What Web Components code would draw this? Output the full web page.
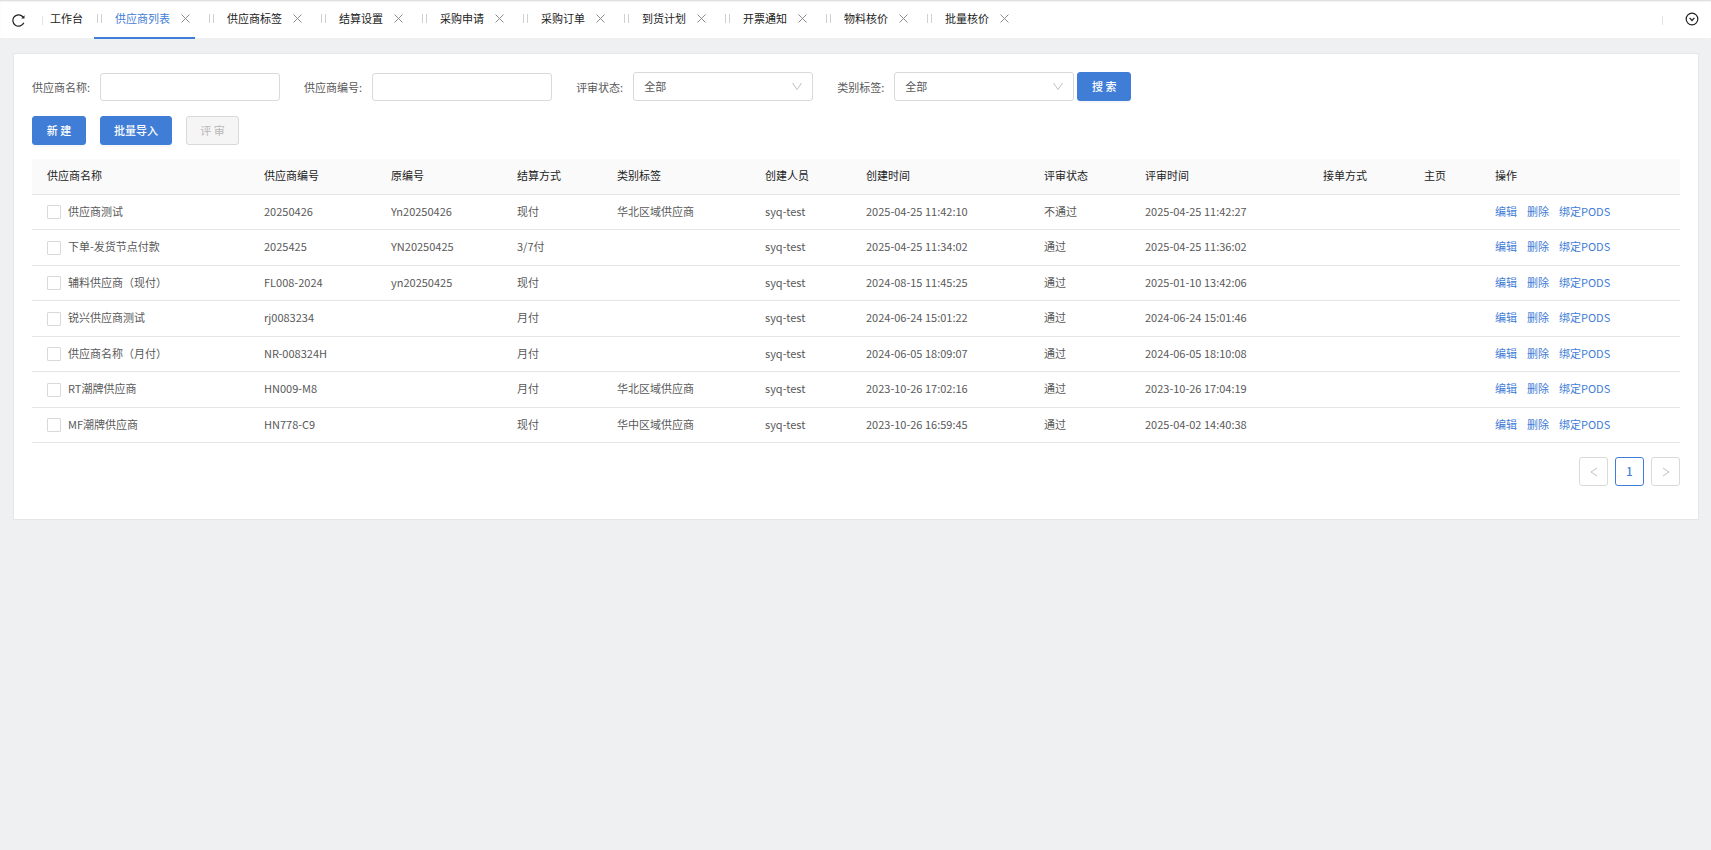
<!DOCTYPE html>
<html lang="zh-CN">
<head>
<meta charset="utf-8">
<title>供应商列表</title>
<style>
  :root {
    --primary: #3f7dd6;
    --line: #e6e6e6;
    --control-line: #d9d9d9;
    --text: #595959;
    --text-strong: #222;
  }
  body {
    margin: 0;
    min-height: 100vh;
    background: #eff0f2;
    color: var(--text);
    font: 11px/17px "Noto Sans CJK SC", "Liberation Sans", sans-serif;
  }
</style>
</head>
<body>
<supplier-page></supplier-page>

<template id="tab-bar-tpl">
  <style>
    :host { display: flex; align-items: center; height: 38px; background: #fff; box-shadow: inset 0 2px 2px -1px #d4d6d8; box-sizing: border-box; padding: 0 12px; color: var(--text-strong); }
    button { display: flex; padding: 0; border: 0; background: none; color: inherit; }
    svg { display: block; fill: none; stroke: currentColor; }
    .sep { width: 1px; height: 9px; background: #e4e4e4; margin-top: 3px; }
    .sep.left { margin-left: 17px; }
    .sep.right { margin-right: 22px; }
    nav { flex: 1; display: flex; gap: 11px; align-self: stretch; min-width: 0; }
    .refresh { margin-top: 2px; }
  </style>
  <button class="refresh" aria-label="刷新"><svg width="13" height="13" viewBox="0 0 13 13" stroke-width="1.2"><path d="M11.800 8.700A5.700 5.700 0 1 1 11.200 3.200"/><path d="M12.500 1.300v3.200H9.200z" fill="currentColor" stroke="none"/></svg></button>
  <span class="sep left"></span>
  <nav><slot></slot></nav>
  <span class="sep right"></span>
  <button aria-label="更多"><svg width="14" height="14" viewBox="0 0 14 14" stroke-width="1.2"><circle cx="7" cy="7" r="5.8"/><path d="M4.6 5.8 7 8.5l2.4-2.7"/></svg></button>
</template>

<template id="tab-item-tpl">
  <style>
    :host { display: flex; align-items: center; height: 39px; padding: 0 5px 2px 3px; box-sizing: border-box; white-space: nowrap; }
    :host([home]) { padding: 0 0 2px 7px; }
    :host([active]) { color: var(--primary); box-shadow: inset 0 -2px var(--primary); }
    a { color: inherit; text-decoration: none; }
    .grip { width: 3px; height: 9px; border: solid #d0d0d0; border-width: 0 1px; margin-right: 13px; }
    button { display: flex; margin-left: 11px; padding: 0; border: 0; background: none; color: #8c8c8c; }
    svg { display: block; fill: none; stroke: currentColor; }
    :host([home]) .grip, :host([home]) button { display: none; }
  </style>
  <span class="grip"></span><a href="#"><slot></slot></a>
  <button aria-label="关闭"><svg width="9" height="9" viewBox="0 0 9 9"><path d="M.5.5l8 8M8.500.5l-8 8"/></svg></button>
</template>

<template id="form-field-tpl">
  <style>
    :host { display: flex; align-items: flex-end; }
    label { line-height: 28px; margin-right: 10px; white-space: nowrap; }
    input, select { display: block; width: 180px; height: 28px; box-sizing: border-box; border: 1px solid var(--control-line); border-radius: 3px; background: #fff; font: inherit; color: var(--text); padding: 0 10px; outline: 0; }
    select { height: 29px; appearance: none; }
    .box { position: relative; }
    svg { position: absolute; right: 11px; top: 10px; fill: none; stroke: #bfbfbf; pointer-events: none; }
  </style>
  <label for="control"></label>
  <div class="box"></div>
</template>

<template id="ui-button-tpl">
  <style>
    :host { display: block; }
    button { display: block; height: 29px; min-width: 53px; padding: 0 13px; border: 1px solid var(--primary); border-radius: 3px; background: var(--primary); color: #fff; font: inherit; font-weight: 500; white-space: nowrap; box-shadow: 0 2px 0 rgba(0,0,0,.03); }
    button:enabled { min-width: 54px; }
    button:disabled { background: #f5f5f5; border-color: var(--control-line); color: #b8b8b8; font-weight: 400; box-shadow: none; }
  </style>
  <button><slot></slot></button>
</template>

<template id="supplier-table-tpl">
  <style>
    :host { display: block; }
    table { width: 100%; table-layout: fixed; border-collapse: separate; border-spacing: 0; }
    th, td { height: 35px; box-sizing: border-box; padding: 0 0 2px 15px; border-bottom: 1px solid var(--line); text-align: left; white-space: nowrap; overflow: hidden; }
    th { height: 36px; background: #fafafa; color: var(--text-strong); font-weight: 400; }
    th:first-child { border-top-left-radius: 3px; }
    th:last-child { border-top-right-radius: 3px; }
    tr:nth-child(even) td { height: 36px; }
    label { display: flex; align-items: center; gap: 7px; }
    input { appearance: none; width: 14px; height: 14px; margin: 2px 0 0; border: 1px solid var(--control-line); border-radius: 1px; background: #fff; }
    .ops { display: flex; gap: 10px; }
    a { color: var(--primary); text-decoration: none; }
  </style>
  <table><colgroup></colgroup><thead><tr></tr></thead><tbody></tbody></table>
</template>

<template id="page-nav-tpl">
  <style>
    :host { display: flex; justify-content: flex-end; gap: 7px; }
    button { display: grid; place-items: center; width: 29px; height: 29px; padding: 0; border: 1px solid var(--control-line); border-radius: 3px; background: #fff; color: #bfbfbf; font: inherit; }
    .current { border-color: var(--primary); color: var(--primary); font-weight: 500; }
    svg { display: block; fill: none; stroke: currentColor; }
  </style>
  <button disabled aria-label="上一页"><svg width="8" height="10" viewBox="0 0 8 10"><path d="M7 1 1 5l6 4"/></svg></button>
  <button class="current" aria-current="page">1</button>
  <button disabled aria-label="下一页"><svg width="8" height="10" viewBox="0 0 8 10"><path d="M1 1l6 4-6 4"/></svg></button>
</template>

<template id="supplier-page-tpl">
  <style>
    :host { display: block; }
    main { margin: 15px 12px 0 13px; padding: 18px 18px 33px; background: #fff; border: 1px solid var(--line); }
    .filters { display: flex; flex-wrap: wrap; align-items: flex-end; gap: 24px; }
    .last { display: flex; gap: 3px; }
    .actions { display: flex; gap: 14px; margin: 15px 0 14px; }
    page-nav { margin-top: 14px; }
  </style>
  <tab-bar>
    <tab-item home>工作台</tab-item>
    <tab-item active>供应商列表</tab-item>
    <tab-item>供应商标签</tab-item>
    <tab-item>结算设置</tab-item>
    <tab-item>采购申请</tab-item>
    <tab-item>采购订单</tab-item>
    <tab-item>到货计划</tab-item>
    <tab-item>开票通知</tab-item>
    <tab-item>物料核价</tab-item>
    <tab-item>批量核价</tab-item>
  </tab-bar>
  <main>
    <div class="filters">
      <form-field label="供应商名称:"></form-field>
      <form-field label="供应商编号:"></form-field>
      <form-field label="评审状态:" option="全部"></form-field>
      <div class="last">
        <form-field label="类别标签:" option="全部"></form-field>
        <ui-button>搜 索</ui-button>
      </div>
    </div>
    <div class="actions">
      <ui-button>新 建</ui-button>
      <ui-button>批量导入</ui-button>
      <ui-button disabled>评 审</ui-button>
    </div>
    <supplier-table></supplier-table>
    <page-nav></page-nav>
  </main>
</template>

<script>
  class TemplateElement extends HTMLElement {
    constructor() {
      super();
      const tpl = document.getElementById(this.localName + '-tpl');
      this.attachShadow({ mode: 'open' }).append(document.importNode(tpl.content, true));
    }
  }

  class TabBar extends TemplateElement {}
  class TabItem extends TemplateElement {}
  class PageNav extends TemplateElement {}
  class SupplierPage extends TemplateElement {}

  class UiButton extends TemplateElement {
    connectedCallback() {
      this.shadowRoot.querySelector('button').disabled = this.hasAttribute('disabled');
    }
  }

  class FormField extends TemplateElement {
    connectedCallback() {
      this.shadowRoot.querySelector('label').textContent = this.getAttribute('label');
      const option = this.getAttribute('option');
      this.shadowRoot.querySelector('.box').innerHTML = option
        ? `<select id="control"><option>${option}</option></select>
           <svg width="10" height="9" viewBox="0 0 10 9"><path d="M.5 1 5 7.500 9.500 1"/></svg>`
        : '<input id="control" type="text">';
    }
  }

  const COLUMNS = [
    ['供应商名称', 217], ['供应商编号', 127], ['原编号', 126], ['结算方式', 100],
    ['类别标签', 148], ['创建人员', 101], ['创建时间', 178], ['评审状态', 101],
    ['评审时间', 178], ['接单方式', 101], ['主页', 71], ['操作', 200]
  ];
  const ROWS = [
    ['供应商测试', '20250426', 'Yn20250426', '现付', '华北区域供应商', 'syq-test', '2025-04-25 11:42:10', '不通过', '2025-04-25 11:42:27'],
    ['下单-发货节点付款', '2025425', 'YN20250425', '3/7付', '', 'syq-test', '2025-04-25 11:34:02', '通过', '2025-04-25 11:36:02'],
    ['辅料供应商（现付）', 'FL008-2024', 'yn20250425', '现付', '', 'syq-test', '2024-08-15 11:45:25', '通过', '2025-01-10 13:42:06'],
    ['锐兴供应商测试', 'rj0083234', '', '月付', '', 'syq-test', '2024-06-24 15:01:22', '通过', '2024-06-24 15:01:46'],
    ['供应商名称（月付）', 'NR-008324H', '', '月付', '', 'syq-test', '2024-06-05 18:09:07', '通过', '2024-06-05 18:10:08'],
    ['RT潮牌供应商', 'HN009-M8', '', '月付', '华北区域供应商', 'syq-test', '2023-10-26 17:02:16', '通过', '2023-10-26 17:04:19'],
    ['MF潮牌供应商', 'HN778-C9', '', '现付', '华中区域供应商', 'syq-test', '2023-10-26 16:59:45', '通过', '2025-04-02 14:40:38']
  ];

  class SupplierTable extends TemplateElement {
    connectedCallback() {
      const find = s => this.shadowRoot.querySelector(s);
      find('colgroup').innerHTML = COLUMNS.map(c => `<col style="width:${c[1]}px">`).join('');
      find('thead tr').innerHTML = COLUMNS.map(c => `<th scope="col">${c[0]}</th>`).join('');
      find('tbody').innerHTML = ROWS.map(([name, ...rest]) => `<tr>
        <td><label><input type="checkbox">${name}</label></td>
        ${rest.map(v => `<td>${v}</td>`).join('')}<td></td><td></td>
        <td><div class="ops"><a href="#">编辑</a><a href="#">删除</a><a href="#">绑定PODS</a></div></td>
      </tr>`).join('');
    }
  }

  customElements.define('tab-item', TabItem);
  customElements.define('tab-bar', TabBar);
  customElements.define('form-field', FormField);
  customElements.define('ui-button', UiButton);
  customElements.define('supplier-table', SupplierTable);
  customElements.define('page-nav', PageNav);
  customElements.define('supplier-page', SupplierPage);
</script>
</body>
</html>
